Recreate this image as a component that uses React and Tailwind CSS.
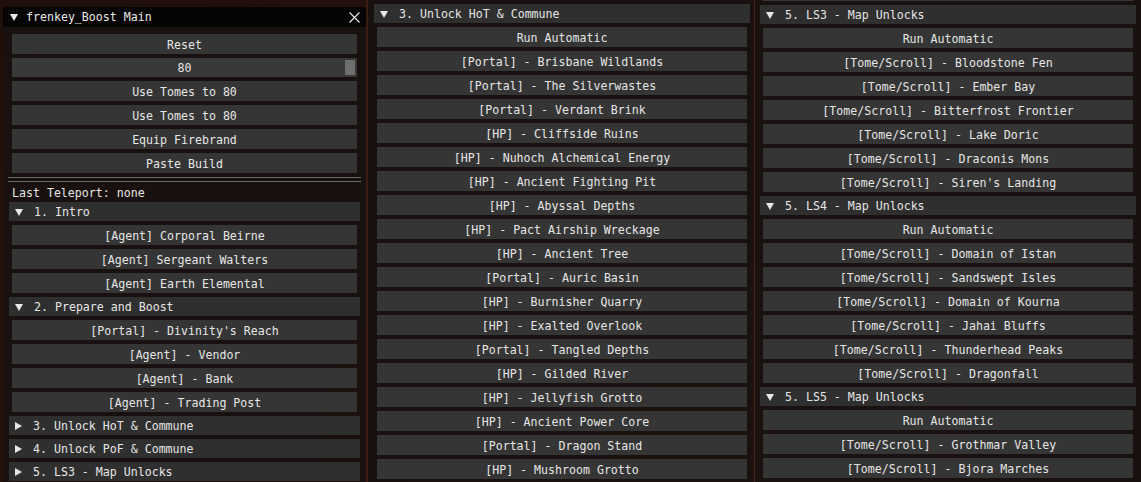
import React from "react";

function Tri({ down }) {
  return down ? (
    <svg width="8" height="7" viewBox="0 0 8 7" className="shrink-0">
      <polygon points="0,0 8,0 4,7" fill="#e8e8e8" />
    </svg>
  ) : (
    <svg width="7" height="8" viewBox="0 0 7 8" className="shrink-0">
      <polygon points="0,0 7,4 0,8" fill="#e8e8e8" />
    </svg>
  );
}

function Btn({ t }) {
  return (
    <div className="h-[20px] mx-[3px] bg-[#353535] flex items-center justify-center pt-[3px] whitespace-pre text-[#e6e6e6] shrink-0">
      {t}
    </div>
  );
}

function Header({ t, open }) {
  return (
    <div className="h-[19px] bg-[#2f2f2f] flex items-center pl-[6px] gap-[11px] whitespace-pre text-[#e6e6e6] shrink-0">
      <div className="pt-[1px]">
        <Tri down={open} />
      </div>
      <span className="pt-[3px]">{t}</span>
    </div>
  );
}

const col2 = [
  "Run Automatic",
  "[Portal] - Brisbane Wildlands",
  "[Portal] - The Silverwastes",
  "[Portal] - Verdant Brink",
  "[HP] - Cliffside Ruins",
  "[HP] - Nuhoch Alchemical Energy",
  "[HP] - Ancient Fighting Pit",
  "[HP] - Abyssal Depths",
  "[HP] - Pact Airship Wreckage",
  "[HP] - Ancient Tree",
  "[Portal] - Auric Basin",
  "[HP] - Burnisher Quarry",
  "[HP] - Exalted Overlook",
  "[Portal] - Tangled Depths",
  "[HP] - Gilded River",
  "[HP] - Jellyfish Grotto",
  "[HP] - Ancient Power Core",
  "[Portal] - Dragon Stand",
  "[HP] - Mushroom Grotto",
];

const ls3 = [
  "Run Automatic",
  "[Tome/Scroll] - Bloodstone Fen",
  "[Tome/Scroll] - Ember Bay",
  "[Tome/Scroll] - Bitterfrost Frontier",
  "[Tome/Scroll] - Lake Doric",
  "[Tome/Scroll] - Draconis Mons",
  "[Tome/Scroll] - Siren's Landing",
];
const ls4 = [
  "Run Automatic",
  "[Tome/Scroll] - Domain of Istan",
  "[Tome/Scroll] - Sandswept Isles",
  "[Tome/Scroll] - Domain of Kourna",
  "[Tome/Scroll] - Jahai Bluffs",
  "[Tome/Scroll] - Thunderhead Peaks",
  "[Tome/Scroll] - Dragonfall",
];
const ls5 = [
  "Run Automatic",
  "[Tome/Scroll] - Grothmar Valley",
  "[Tome/Scroll] - Bjora Marches",
];

export default function App() {
  return (
    <div className="w-[1141px] h-[482px] overflow-hidden flex bg-[radial-gradient(ellipse_at_60%_90%,#4a2414_0%,#2a140c_45%,#1e0f0a_100%)] font-['DejaVu_Sans_Mono','Liberation_Mono',monospace] text-[11.6px] leading-none">
      {/* Panel 1 */}
      <div className="ml-[3px] w-[363px] mt-[7px] flex flex-col bg-[#181110]/[0.94] shrink-0">
        <div className="h-[20px] bg-[#060404] flex items-center pl-[7px] pr-[6px] shrink-0">
          <Tri down />
          <span className="ml-[8px] pt-[2px] text-[#e8e8e8] whitespace-pre">frenkey_Boost Main</span>
          <svg width="11" height="11" viewBox="0 0 11 11" className="ml-auto">
            <path d="M0.5 0.5 L10.5 10.5 M10.5 0.5 L0.5 10.5" stroke="#e8e8e8" strokeWidth="1.2" />
          </svg>
        </div>
        <div className="px-[6px] pt-[7px] flex flex-col gap-[4px]">
          <Btn t="Reset" />
          <div className="h-[19px] mx-[3px] bg-[#393939] flex items-center justify-center pt-[2px] relative text-[#e6e6e6] shrink-0">
            80
            <div className="absolute right-[2px] top-[2px] w-[10px] h-[15px] bg-[#6e6e6e]" />
          </div>
          <Btn t="Use Tomes to 80" />
          <Btn t="Use Tomes to 80" />
          <Btn t="Equip Firebrand" />
          <Btn t="Paste Build" />
          <div className="flex flex-col gap-[3px] mx-[-1px]">
            <div className="h-[1px] bg-[#6a6a6a]" />
            <div className="h-[1px] bg-[#6a6a6a]" />
          </div>
          <div className="h-[20px] mt-[-4px] mb-[-4px] flex items-center pl-[3px] pt-[3px] text-[#e6e6e6] whitespace-pre shrink-0">
            Last Teleport: none
          </div>
          <Header t="1. Intro" open />
          <Btn t="[Agent] Corporal Beirne" />
          <Btn t="[Agent] Sergeant Walters" />
          <Btn t="[Agent] Earth Elemental" />
          <Header t="2. Prepare and Boost" open />
          <Btn t="[Portal] - Divinity's Reach" />
          <Btn t="[Agent] - Vendor" />
          <Btn t="[Agent] - Bank" />
          <Btn t="[Agent] - Trading Post" />
          <Header t="3. Unlock HoT & Commune" />
          <Header t="4. Unlock PoF & Commune" />
          <Header t="5. LS3 - Map Unlocks" />
        </div>
      </div>

      {/* divider */}
      <div className="w-[2px] shrink-0 bg-[#3c1b11]" />

      {/* Panel 2 */}
      <div className="w-[386px] shrink-0 bg-[#181110]/[0.93] pl-[6px] pr-[4px] pt-[4px] flex flex-col gap-[4px]">
        <Header t="3. Unlock HoT & Commune" open />
        {col2.map((t, i) => (
          <Btn key={i} t={t} />
        ))}
      </div>

      <div className="w-[1px] shrink-0 bg-[#4a2216]" />

      {/* Panel 3 */}
      <div className="flex-1 bg-[#181110]/[0.93] pl-[5px] pr-[5px] flex flex-col gap-[4px]">
        <div className="h-[1px] mx-[3px] bg-[#353535] shrink-0" />
        <Header t="5. LS3 - Map Unlocks" open />
        {ls3.map((t, i) => (
          <Btn key={"a" + i} t={t} />
        ))}
        <Header t="5. LS4 - Map Unlocks" open />
        {ls4.map((t, i) => (
          <Btn key={"b" + i} t={t} />
        ))}
        <Header t="5. LS5 - Map Unlocks" open />
        {ls5.map((t, i) => (
          <Btn key={"c" + i} t={t} />
        ))}
      </div>
    </div>
  );
}
